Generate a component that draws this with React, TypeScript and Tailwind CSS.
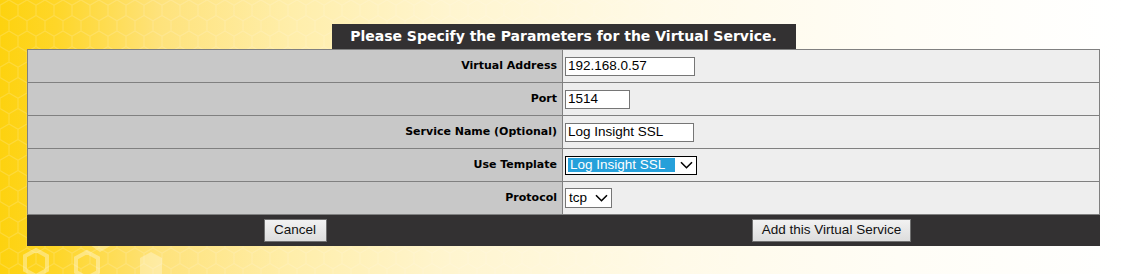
import React from "react";

const rows: { label: string; kind: "input" | "select" | "selectSel"; value: string; w: number }[] = [
  { label: "Virtual Address", kind: "input", value: "192.168.0.57", w: 130 },
  { label: "Port", kind: "input", value: "1514", w: 65 },
  { label: "Service Name (Optional)", kind: "input", value: "Log Insight SSL", w: 129 },
  { label: "Use Template", kind: "selectSel", value: "Log Insight SSL", w: 132 },
  { label: "Protocol", kind: "select", value: "tcp", w: 47 },
];

function Chevron() {
  return (
    <svg width="13" height="8" viewBox="0 0 13 8" className="shrink-0">
      <path d="M1 1.2 L6.5 6.7 L12 1.2" fill="none" stroke="#000" strokeWidth="1.6" />
    </svg>
  );
}

function Field({ kind, value, w }: { kind: string; value: string; w: number }) {
  if (kind === "input") {
    return (
      <div
        className="h-[19px] border border-[#767676] bg-white flex items-center pl-[2px] text-[13.5px] leading-none text-black"
        style={{ width: w, fontFamily: "'Liberation Sans', Arial, sans-serif" }}
      >
        {value}
      </div>
    );
  }
  if (kind === "selectSel") {
    return (
      <div
        className="h-[19px] border border-[#000] bg-white flex items-center pl-[2px] pr-[3px] gap-[5px] text-[13.5px] leading-none"
        style={{ width: w, fontFamily: "'Liberation Sans', Arial, sans-serif" }}
      >
        <div className="flex-1 h-[14px] bg-[#26a0da] text-white flex items-center pl-[2px]">{value}</div>
        <Chevron />
      </div>
    );
  }
  return (
    <div
      className="h-[20px] border border-[#767676] bg-white flex items-center pl-[3px] pr-[3px] justify-between text-[13.5px] leading-none"
      style={{ width: w, fontFamily: "'Liberation Sans', Arial, sans-serif" }}
    >
      <span>{value}</span>
      <Chevron />
    </div>
  );
}

function Btn({ children, w }: { children: React.ReactNode; w: number }) {
  return (
    <div
      className="h-[23px] border border-[#707070] bg-gradient-to-b from-[#f2f2f2] to-[#dddddd] flex items-center justify-center text-[13.5px] text-[#111]"
      style={{ width: w, fontFamily: "'Liberation Sans', Arial, sans-serif" }}
    >
      {children}
    </div>
  );
}

function Hexes() {
  return (
    <svg className="absolute inset-0 pointer-events-none" width="1123" height="274">
      <defs>
        <pattern id="hex" width="18" height="31" patternUnits="userSpaceOnUse">
          <path
            d="M9 0 L18 5.2 L18 15.5 L9 20.7 L0 15.5 L0 5.2 Z M9 20.7 L9 31"
            fill="none"
            stroke="#ffffff"
            strokeWidth="1.2"
            opacity="0.16"
          />
        </pattern>
        <linearGradient id="fade" x1="0" x2="1" y1="0" y2="0">
          <stop offset="0" stopColor="#fff" stopOpacity="1" />
          <stop offset="0.6" stopColor="#fff" stopOpacity="0.6" />
          <stop offset="1" stopColor="#fff" stopOpacity="0" />
        </linearGradient>
        <mask id="m">
          <rect width="1123" height="274" fill="url(#fade)" />
        </mask>
      </defs>
      <rect width="1123" height="274" fill="url(#hex)" mask="url(#m)" />
      <g fill="none" stroke="#fff" strokeWidth="4" opacity="0.35">
        <path d="M25 256 L36 250 L47 256 L47 270 L36 276 L25 270 Z" />
        <path d="M76 258 L87 252 L98 258 L98 272 L87 278 L76 272 Z" />
      </g>
      <path d="M140 258 L151 252 L162 258 L162 276 L140 276 Z" fill="#fff" opacity="0.3" />
      <path d="M90 245 L100 240 L112 245 L100 252 Z" fill="#fff" opacity="0.3" />
    </svg>
  );
}

export default function App() {
  return (
    <div
      className="relative w-[1123px] h-[274px] overflow-hidden"
      style={{
        background:
          "linear-gradient(90deg, #fdd20f 0%, #fed628 5%, #fee27a 14%, #ffeeaa 26%, #fff5cf 40%, #fffae8 60%, #fffdf6 80%, #ffffff 100%)",
      }}
    >
      <Hexes />
      <div className="relative pt-[24px] pl-[27px]">
        <div className="w-[1073px]">
          <div
            className="mx-auto w-[464px] h-[25px] bg-[#333132] text-white font-bold text-[14px] flex items-center justify-center"
            style={{ fontFamily: "'DejaVu Sans', Verdana, sans-serif" }}
          >
            Please Specify the Parameters for the Virtual Service.
          </div>
          <div className="border-t border-l border-r border-[#808080]">
            {rows.map((r) => (
              <div key={r.label} className="grid grid-cols-[535px_1fr] h-[33px] border-b border-[#808080]">
                <div
                  className="bg-[#c8c8c8] border-r border-[#808080] flex items-center justify-end pr-[5px] text-[11px] font-bold text-black"
                  style={{ fontFamily: "'DejaVu Sans', Verdana, sans-serif" }}
                >
                  {r.label}
                </div>
                <div className="bg-[#eeeeee] flex items-center pl-[2px]">
                  <Field kind={r.kind} value={r.value} w={r.w} />
                </div>
              </div>
            ))}
          </div>
          <div className="grid grid-cols-[536px_1fr] h-[31px] bg-[#333132] items-center">
            <div className="flex justify-center">
              <Btn w={63}>Cancel</Btn>
            </div>
            <div className="flex justify-center">
              <Btn w={159}>Add this Virtual Service</Btn>
            </div>
          </div>
        </div>
      </div>
    </div>
  );
}
